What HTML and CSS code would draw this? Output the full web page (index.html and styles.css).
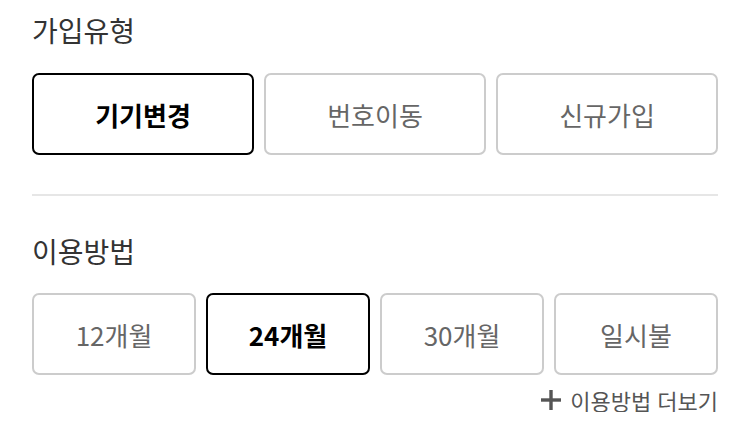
FILE: index.html
```html
<!DOCTYPE html>
<html lang="ko">
<head>
  <meta charset="UTF-8">
  <meta name="viewport" content="width=device-width, initial-scale=1.0">
  <title>가입유형 / 이용방법</title>
  <link rel="stylesheet" href="styles.css">
</head>
<body>
  <div class="section">
    <h2 class="title">가입유형</h2>
    <div class="options three">
      <button class="opt on">기기변경</button>
      <button class="opt">번호이동</button>
      <button class="opt">신규가입</button>
    </div>
  </div>
  <hr class="divider">
  <div class="section">
    <h2 class="title second">이용방법</h2>
    <div class="options four">
      <button class="opt">12개월</button>
      <button class="opt on">24개월</button>
      <button class="opt">30개월</button>
      <button class="opt">일시불</button>
    </div>
    <div class="more-row">
      <a class="more" href="#">
        <svg class="plus" width="20" height="20" viewBox="0 0 20 20">
          <rect x="0" y="8.3" width="20" height="3.4" fill="#555"/>
          <rect x="8.3" y="0" width="3.4" height="20" fill="#555"/>
        </svg>
        이용방법 더보기
      </a>
    </div>
  </div>
</body>
</html>
```

FILE: styles.css
```css
body {
  margin: 0;
  padding: 12px 32px 0;
  background: #fff;
  font-family: "Noto Sans CJK KR", "Noto Sans", sans-serif;
  color: #333;
}

.title {
  margin: 0;
  font-size: 28px;
  font-weight: 400;
  line-height: 36px;
  color: #333;
}

.title.second {
  margin-top: 37px;
}

.options {
  display: grid;
  margin-top: 25px;
}

.options.three {
  grid-template-columns: repeat(3, 1fr);
  gap: 10px;
}

.options.four {
  grid-template-columns: repeat(4, 1fr);
  gap: 10px;
  margin-top: 24px;
}

.opt {
  height: 82px;
  background: #fff;
  border: 2px solid #ccc;
  border-radius: 7px;
  font-family: inherit;
  font-size: 26px;
  color: #666;
  cursor: pointer;
  padding: 0;
}

.opt.on {
  border-color: #000;
  color: #000;
  font-weight: 700;
}

.divider {
  margin: 39px 0 0;
  border: none;
  height: 2px;
  background: #e6e6e6;
}

.more-row {
  display: flex;
  justify-content: flex-end;
  margin-top: 13px;
}

.more {
  display: flex;
  align-items: center;
  gap: 9px;
  font-size: 22px;
  line-height: 24px;
  color: #555;
  text-decoration: none;
}
```
